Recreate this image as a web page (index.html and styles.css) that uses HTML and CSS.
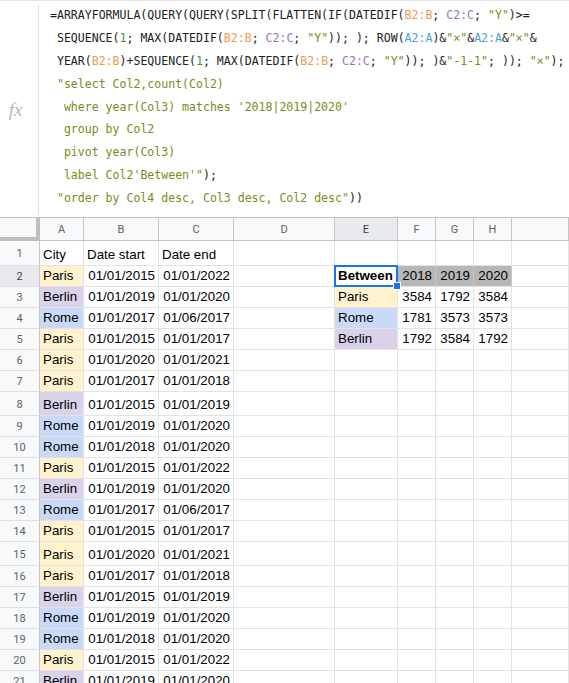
FILE: index.html
```html
<!DOCTYPE html>
<html>
<head>
<meta charset="utf-8">
<link rel="stylesheet" href="styles.css">
</head>
<body>
<div class="fbar">
  <div class="fx-area"><span class="fx">fx</span></div>
  <div class="formula">
<div class="fl">=ARRAYFORMULA(QUERY(QUERY(SPLIT(FLATTEN(IF(DATEDIF(<span class="rb">B2:B</span>; <span class="rc">C2:C</span>; <span class="st">"Y"</span>)&gt;=</div>
<div class="fl"> SEQUENCE(<span class="nm">1</span>; MAX(DATEDIF(<span class="rb">B2:B</span>; <span class="rc">C2:C</span>; <span class="st">"Y"</span>)); ); ROW(<span class="ra">A2:A</span>)&amp;<span class="st">"×"</span>&amp;<span class="ra">A2:A</span>&amp;<span class="st">"×"</span>&amp;</div>
<div class="fl"> YEAR(<span class="rb">B2:B</span>)+SEQUENCE(<span class="nm">1</span>; MAX(DATEDIF(<span class="rb">B2:B</span>; <span class="rc">C2:C</span>; <span class="st">"Y"</span>)); )&amp;<span class="st">"-1-1"</span>; )); <span class="st">"×"</span>);</div>
<div class="fl"> <span class="st">"select Col2,count(Col2)</span></div>
<div class="fl">  <span class="st">where year(Col3) matches '2018|2019|2020'</span></div>
<div class="fl">  <span class="st">group by Col2</span></div>
<div class="fl">  <span class="st">pivot year(Col3)</span></div>
<div class="fl">  <span class="st">label Col2'Between'"</span>);</div>
<div class="fl"> <span class="st">"order by Col4 desc, Col3 desc, Col2 desc"</span>))</div>
  </div>
</div>

<div class="sheet">
  <div class="row hdr">
    <div class="corner"></div>
    <div class="ch">A</div><div class="ch">B</div><div class="ch">C</div><div class="ch">D</div>
    <div class="ch sel">E</div><div class="ch">F</div><div class="ch">G</div><div class="ch">H</div><div class="ch"></div>
  </div>

  <div class="row tall1">
    <div class="rh">1</div>
    <div class="c">City</div><div class="c">Date start</div><div class="c">Date end</div><div class="c"></div>
    <div class="c"></div><div class="c"></div><div class="c"></div><div class="c"></div><div class="c"></div>
  </div>
  <div class="row">
    <div class="rh sel">2</div>
    <div class="c paris">Paris</div><div class="c n">01/01/2015</div><div class="c n">01/01/2022</div><div class="c"></div>
    <div class="c active b">Between<span class="handle"></span></div><div class="c n gray">2018</div><div class="c n gray">2019</div><div class="c n gray">2020</div><div class="c"></div>
  </div>
  <div class="row">
    <div class="rh">3</div>
    <div class="c berlin">Berlin</div><div class="c n">01/01/2019</div><div class="c n">01/01/2020</div><div class="c"></div>
    <div class="c paris">Paris</div><div class="c n">3584</div><div class="c n">1792</div><div class="c n">3584</div><div class="c"></div>
  </div>
  <div class="row">
    <div class="rh">4</div>
    <div class="c rome">Rome</div><div class="c n">01/01/2017</div><div class="c n">01/06/2017</div><div class="c"></div>
    <div class="c rome">Rome</div><div class="c n">1781</div><div class="c n">3573</div><div class="c n">3573</div><div class="c"></div>
  </div>
  <div class="row">
    <div class="rh">5</div>
    <div class="c paris">Paris</div><div class="c n">01/01/2015</div><div class="c n">01/01/2017</div><div class="c"></div>
    <div class="c berlin">Berlin</div><div class="c n">1792</div><div class="c n">3584</div><div class="c n">1792</div><div class="c"></div>
  </div>
  <div class="row">
    <div class="rh">6</div>
    <div class="c paris">Paris</div><div class="c n">01/01/2020</div><div class="c n">01/01/2021</div><div class="c"></div>
    <div class="c"></div><div class="c"></div><div class="c"></div><div class="c"></div><div class="c"></div>
  </div>
  <div class="row">
    <div class="rh">7</div>
    <div class="c paris">Paris</div><div class="c n">01/01/2017</div><div class="c n">01/01/2018</div><div class="c"></div>
    <div class="c"></div><div class="c"></div><div class="c"></div><div class="c"></div><div class="c"></div>
  </div>
  <div class="row tall">
    <div class="rh">8</div>
    <div class="c berlin">Berlin</div><div class="c n">01/01/2015</div><div class="c n">01/01/2019</div><div class="c"></div>
    <div class="c"></div><div class="c"></div><div class="c"></div><div class="c"></div><div class="c"></div>
  </div>
  <div class="row">
    <div class="rh">9</div>
    <div class="c rome">Rome</div><div class="c n">01/01/2019</div><div class="c n">01/01/2020</div><div class="c"></div>
    <div class="c"></div><div class="c"></div><div class="c"></div><div class="c"></div><div class="c"></div>
  </div>
  <div class="row">
    <div class="rh">10</div>
    <div class="c rome">Rome</div><div class="c n">01/01/2018</div><div class="c n">01/01/2020</div><div class="c"></div>
    <div class="c"></div><div class="c"></div><div class="c"></div><div class="c"></div><div class="c"></div>
  </div>
  <div class="row">
    <div class="rh">11</div>
    <div class="c paris">Paris</div><div class="c n">01/01/2015</div><div class="c n">01/01/2022</div><div class="c"></div>
    <div class="c"></div><div class="c"></div><div class="c"></div><div class="c"></div><div class="c"></div>
  </div>
  <div class="row">
    <div class="rh">12</div>
    <div class="c berlin">Berlin</div><div class="c n">01/01/2019</div><div class="c n">01/01/2020</div><div class="c"></div>
    <div class="c"></div><div class="c"></div><div class="c"></div><div class="c"></div><div class="c"></div>
  </div>
  <div class="row">
    <div class="rh">13</div>
    <div class="c rome">Rome</div><div class="c n">01/01/2017</div><div class="c n">01/06/2017</div><div class="c"></div>
    <div class="c"></div><div class="c"></div><div class="c"></div><div class="c"></div><div class="c"></div>
  </div>
  <div class="row">
    <div class="rh">14</div>
    <div class="c paris">Paris</div><div class="c n">01/01/2015</div><div class="c n">01/01/2017</div><div class="c"></div>
    <div class="c"></div><div class="c"></div><div class="c"></div><div class="c"></div><div class="c"></div>
  </div>
  <div class="row tall">
    <div class="rh">15</div>
    <div class="c paris">Paris</div><div class="c n">01/01/2020</div><div class="c n">01/01/2021</div><div class="c"></div>
    <div class="c"></div><div class="c"></div><div class="c"></div><div class="c"></div><div class="c"></div>
  </div>
  <div class="row">
    <div class="rh">16</div>
    <div class="c paris">Paris</div><div class="c n">01/01/2017</div><div class="c n">01/01/2018</div><div class="c"></div>
    <div class="c"></div><div class="c"></div><div class="c"></div><div class="c"></div><div class="c"></div>
  </div>
  <div class="row">
    <div class="rh">17</div>
    <div class="c berlin">Berlin</div><div class="c n">01/01/2015</div><div class="c n">01/01/2019</div><div class="c"></div>
    <div class="c"></div><div class="c"></div><div class="c"></div><div class="c"></div><div class="c"></div>
  </div>
  <div class="row">
    <div class="rh">18</div>
    <div class="c rome">Rome</div><div class="c n">01/01/2019</div><div class="c n">01/01/2020</div><div class="c"></div>
    <div class="c"></div><div class="c"></div><div class="c"></div><div class="c"></div><div class="c"></div>
  </div>
  <div class="row">
    <div class="rh">19</div>
    <div class="c rome">Rome</div><div class="c n">01/01/2018</div><div class="c n">01/01/2020</div><div class="c"></div>
    <div class="c"></div><div class="c"></div><div class="c"></div><div class="c"></div><div class="c"></div>
  </div>
  <div class="row">
    <div class="rh">20</div>
    <div class="c paris">Paris</div><div class="c n">01/01/2015</div><div class="c n">01/01/2022</div><div class="c"></div>
    <div class="c"></div><div class="c"></div><div class="c"></div><div class="c"></div><div class="c"></div>
  </div>
  <div class="row">
    <div class="rh">21</div>
    <div class="c berlin">Berlin</div><div class="c n">01/01/2019</div><div class="c n">01/01/2020</div><div class="c"></div>
    <div class="c"></div><div class="c"></div><div class="c"></div><div class="c"></div><div class="c"></div>
  </div>
</div>
</body>
</html>
```

FILE: styles.css
```css
html, body {
  margin: 0;
  padding: 0;
  height: 683px;
  overflow: hidden;
  background: #fff;
}

.fbar {
  display: flex;
  border-top: 1px solid #e3e3e3;
  border-bottom: 1px solid #c0c0c0;
  box-sizing: border-box;
  height: 218px;
}

.fx-area {
  width: 38px;
  flex: none;
  margin: 4px 0 2px 0;
  border-right: 1px solid #dadce0;
  display: flex;
  align-items: center;
  justify-content: center;
}

.fx {
  font-family: "Liberation Serif", serif;
  font-style: italic;
  font-size: 19px;
  color: #b9b9b9;
  margin-top: 0;
  margin-right: 7px;
}

.formula {
  padding: 3px 0 0 11px;
  font-family: "DejaVu Sans Mono", monospace;
  font-size: 11.56px;
  color: #202124;
  overflow: hidden;
}

.fl {
  white-space: pre;
  line-height: 22.9px;
  height: 22.9px;
}

.rb { color: #f19a4c; }
.rc { color: #9d6fb6; }
.ra { color: #4fa2d6; }
.st { color: #7e8a1c; }
.nm { color: #2b9b4a; }

.sheet {
  font-family: "Liberation Sans", Arial, sans-serif;
}

.row {
  display: grid;
  grid-template-columns: 40px 44px 75px 75px 101px 63px 38px 38px 38px 1fr;
  height: 21px;
}

.row.hdr { height: 23px; }
.row.tall1 { height: 25px; }
.row.tall { height: 24px; }

.corner {
  background: #f8f9fa;
  border-right: 4px solid #bfbfbf;
  border-bottom: 4px solid #bfbfbf;
  box-sizing: border-box;
}

.ch {
  background: #f8f9fa;
  border-right: 1px solid #c4c7c5;
  border-bottom: 1px solid #c4c7c5;
  box-sizing: border-box;
  display: flex;
  align-items: center;
  justify-content: center;
  font-size: 11px;
  color: #5f6368;
  font-family: Roboto, "Liberation Sans", sans-serif;
}

.ch.sel { background: #e8eaed; color: #3c4043; }

.rh {
  background: #f8f9fa;
  border-right: 1px solid #c4c7c5;
  border-bottom: 1px solid #e0e0e0;
  box-sizing: border-box;
  display: flex;
  align-items: center;
  justify-content: center;
  font-size: 11px;
  color: #5f6368;
  font-family: Roboto, "Liberation Sans", sans-serif;
  padding-top: 1px;
}

.rh.sel { background: #e8eaed; color: #3c4043; }

.c {
  box-sizing: border-box;
  border-right: 1px solid #e2e3e3;
  border-bottom: 1px solid #e2e3e3;
  display: flex;
  align-items: flex-end;
  padding: 0 3px 2px 3px;
  font-size: 13.33px;
  line-height: 17px;
  color: #000;
  white-space: nowrap;
  overflow: hidden;
  position: relative;
}

.c.n { justify-content: flex-end; }
.c.b { font-weight: bold; }

.paris { background: #fff2cc; }
.berlin { background: #d9d2e9; }
.rome { background: #c9daf8; }
.gray { background: #b7b7b7; border-right-color: #c8c8c8; }

.c.active {
  overflow: visible;
  z-index: 2;
}

.c.active::after {
  content: "";
  position: absolute;
  left: -1px;
  top: -1px;
  right: -1px;
  bottom: -1px;
  border: 2px solid #1a73e8;
  pointer-events: none;
}

.handle {
  position: absolute;
  right: -4px;
  bottom: -4px;
  width: 6px;
  height: 6px;
  background: #1a73e8;
  border: 1px solid #fff;
  z-index: 3;
}
```
